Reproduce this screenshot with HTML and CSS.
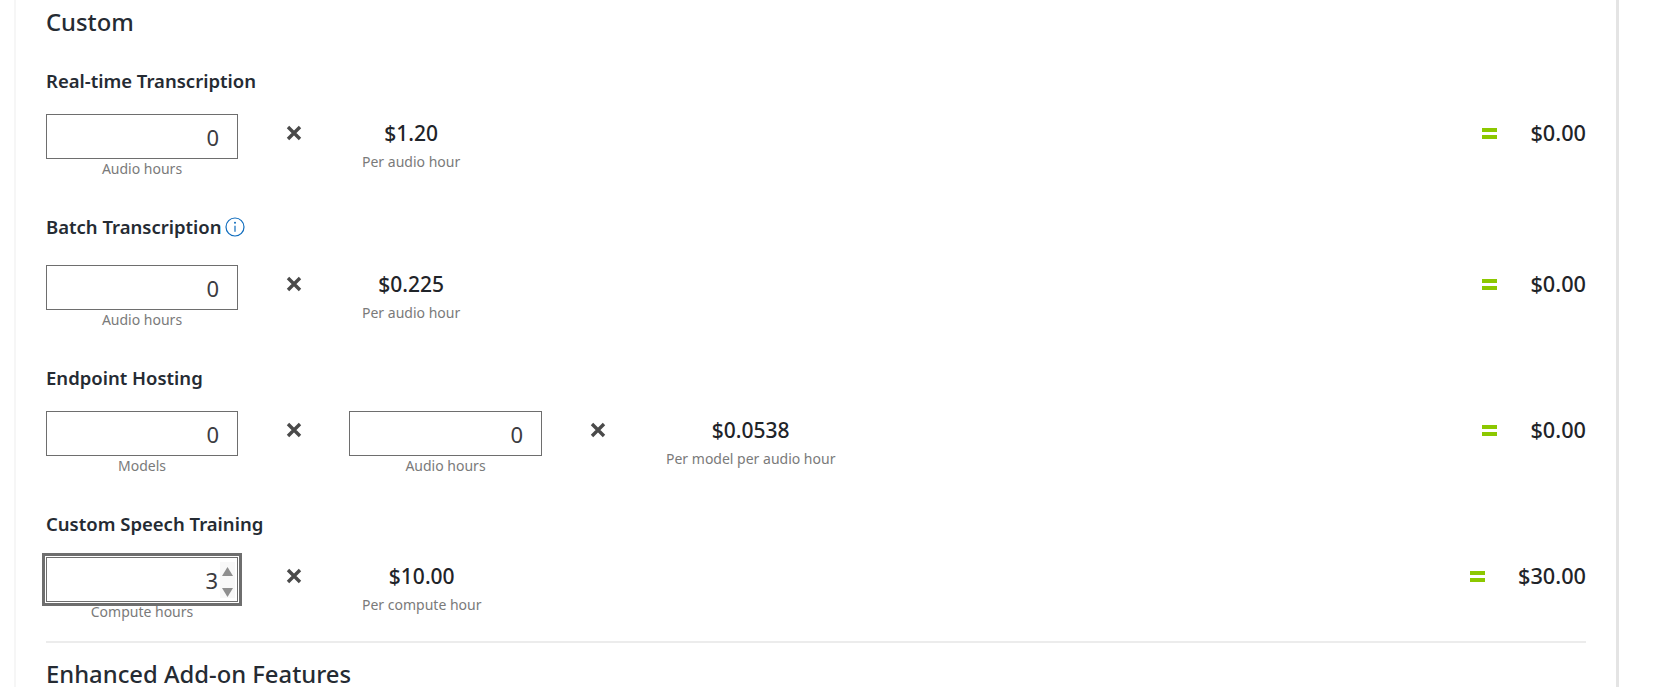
FILE: index.html
```html
<!DOCTYPE html>
<html lang="en">
<head>
    <meta charset="UTF-8">
    <title>Speech Service Pricing Calculator</title>
    <link rel="stylesheet" href="styles.css">
</head>
<body>
    <div class="panel">
        <h2 class="section-title">Custom</h2>

        <div class="meter meter-first">
            <h3 class="meter-title">Real-time Transcription</h3>
            <div class="calc-row">
                <div class="field">
                    <input class="qty" type="text" value="0" aria-label="Audio hours">
                    <span class="caption">Audio hours</span>
                </div>
                <span class="times"><svg viewBox="0 0 16 16"><path d="M2 2l12 12M14 2L2 14"/></svg></span>
                <div class="price">
                    <strong>$1.20</strong>
                    <span class="caption">Per audio hour</span>
                </div>
                <span class="equals"></span>
                <span class="total">$0.00</span>
            </div>
        </div>

        <div class="meter meter-info">
            <h3 class="meter-title">Batch Transcription
                <svg class="info" viewBox="0 0 20 20"><circle cx="10" cy="10" r="9"/><path d="M10 8.8v6"/><circle class="dot" cx="10" cy="5.8" r="1"/></svg>
            </h3>
            <div class="calc-row">
                <div class="field">
                    <input class="qty" type="text" value="0" aria-label="Audio hours">
                    <span class="caption">Audio hours</span>
                </div>
                <span class="times"><svg viewBox="0 0 16 16"><path d="M2 2l12 12M14 2L2 14"/></svg></span>
                <div class="price">
                    <strong>$0.225</strong>
                    <span class="caption">Per audio hour</span>
                </div>
                <span class="equals"></span>
                <span class="total">$0.00</span>
            </div>
        </div>

        <div class="meter">
            <h3 class="meter-title">Endpoint Hosting</h3>
            <div class="calc-row">
                <div class="field">
                    <input class="qty" type="text" value="0" aria-label="Models">
                    <span class="caption">Models</span>
                </div>
                <span class="times"><svg viewBox="0 0 16 16"><path d="M2 2l12 12M14 2L2 14"/></svg></span>
                <div class="field field-wide">
                    <input class="qty" type="text" value="0" aria-label="Audio hours">
                    <span class="caption">Audio hours</span>
                </div>
                <span class="times"><svg viewBox="0 0 16 16"><path d="M2 2l12 12M14 2L2 14"/></svg></span>
                <div class="price">
                    <strong>$0.0538</strong>
                    <span class="caption">Per model per audio hour</span>
                </div>
                <span class="equals"></span>
                <span class="total">$0.00</span>
            </div>
        </div>

        <div class="meter meter-last">
            <h3 class="meter-title">Custom Speech Training</h3>
            <div class="calc-row">
                <div class="field">
                    <div class="spin-wrap">
                        <input class="qty qty-focus" type="text" value="3" aria-label="Compute hours">
                        <span class="spinner">
                            <svg viewBox="0 0 10 8"><path d="M5 0l5 8H0z"/></svg>
                            <svg viewBox="0 0 10 8"><path d="M0 0h10L5 8z"/></svg>
                        </span>
                    </div>
                    <span class="caption">Compute hours</span>
                </div>
                <span class="times"><svg viewBox="0 0 16 16"><path d="M2 2l12 12M14 2L2 14"/></svg></span>
                <div class="price">
                    <strong>$10.00</strong>
                    <span class="caption">Per compute hour</span>
                </div>
                <span class="equals"></span>
                <span class="total">$30.00</span>
            </div>
        </div>

        <hr class="divider">
        <h2 class="section-title addon-title">Enhanced Add-on Features</h2>
    </div>
</body>
</html>
```

FILE: styles.css
```css
html, body {
    height: 687px;
    overflow: hidden;
}

body {
    margin: 0;
    background-color: white;
    color: #252b33;
    font-family: "Noto Sans", "Open Sans", Arial, sans-serif;
}

.panel {
    width: 1540px;
    height: 687px;
    margin-left: 14px;
    padding: 0 30px;
    border-left: 2px solid #f6f6f6;
    border-right: 3px solid #e4e4e4;
    overflow: hidden;
}

.section-title {
    margin: 0;
    padding-top: 6px;
    height: 33px;
    line-height: 33px;
    font-size: 23.8px;
    font-weight: 500;
}

.meter {
    height: 146px;
}

.meter-first {
    margin-top: 30px;
}

.meter-info {
    height: 151px;
}

.meter-info .calc-row {
    margin-top: 26px;
}

.meter-last {
    height: 129px;
}

.meter-title {
    display: flex;
    align-items: center;
    gap: 3px;
    margin: 0;
    height: 24px;
    line-height: 24px;
    font-size: 18.5px;
    font-weight: 600;
}

.info {
    width: 20px;
    height: 20px;
    fill: none;
    stroke: #0f6cbd;
    stroke-width: 1.2;
}

.info .dot {
    fill: #0f6cbd;
    stroke: none;
}

.calc-row {
    display: flex;
    align-items: flex-start;
    margin-top: 21px;
}

.field {
    display: flex;
    flex-direction: column;
    align-items: center;
    width: 192px;
}

.field-wide {
    width: 193px;
}

.qty {
    box-sizing: border-box;
    width: 100%;
    height: 45px;
    padding: 1px 18px 0 8px;
    border: 1px solid #6e6e6e;
    border-radius: 0;
    background-color: white;
    color: #3c3c41;
    font-family: inherit;
    font-size: 22px;
    text-align: right;
}

.caption {
    margin-top: 1px;
    color: #7a7a7a;
    font-size: 14px;
    line-height: 18px;
    white-space: nowrap;
}

.times {
    display: flex;
    justify-content: center;
    width: 16px;
    margin: 11px 47px 0 48px;
}

.times svg {
    width: 16px;
    height: 16px;
    fill: none;
    stroke: #4a4a4a;
    stroke-width: 3.4;
}

.price {
    display: flex;
    flex-direction: column;
    align-items: center;
    padding: 5px 13px 0;
}

.price strong {
    line-height: 28px;
    margin-bottom: 5px;
    font-size: 21px;
    font-weight: 500;
    color: #1f2429;
}

.equals {
    box-sizing: border-box;
    width: 15px;
    height: 11px;
    margin: 14px 33px 0 auto;
    border-top: 4px solid #8cc800;
    border-bottom: 4px solid #8cc800;
}

.total {
    margin-top: 5px;
    line-height: 28px;
    font-size: 21.7px;
    font-weight: 500;
    color: #1f2429;
}

.spin-wrap {
    position: relative;
    width: 100%;
}

.qty-focus {
    display: block;
    outline: 3px solid #6e6e6e;
    outline-offset: 1px;
    padding-right: 19px;
}

.spinner {
    position: absolute;
    top: 5px;
    right: 3px;
    box-sizing: border-box;
    display: flex;
    flex-direction: column;
    justify-content: space-between;
    align-items: center;
    width: 15px;
    height: 36px;
    padding: 5px 0 1px;
    background-color: #f8f8f8;
}

.spinner svg {
    width: 11px;
    height: 9px;
    fill: #8e8e8e;
}

.divider {
    margin: 0;
    border: none;
    border-top: 2px solid #ececec;
}

.addon-title {
    margin-top: 15px;
    padding-top: 0;
}
```
